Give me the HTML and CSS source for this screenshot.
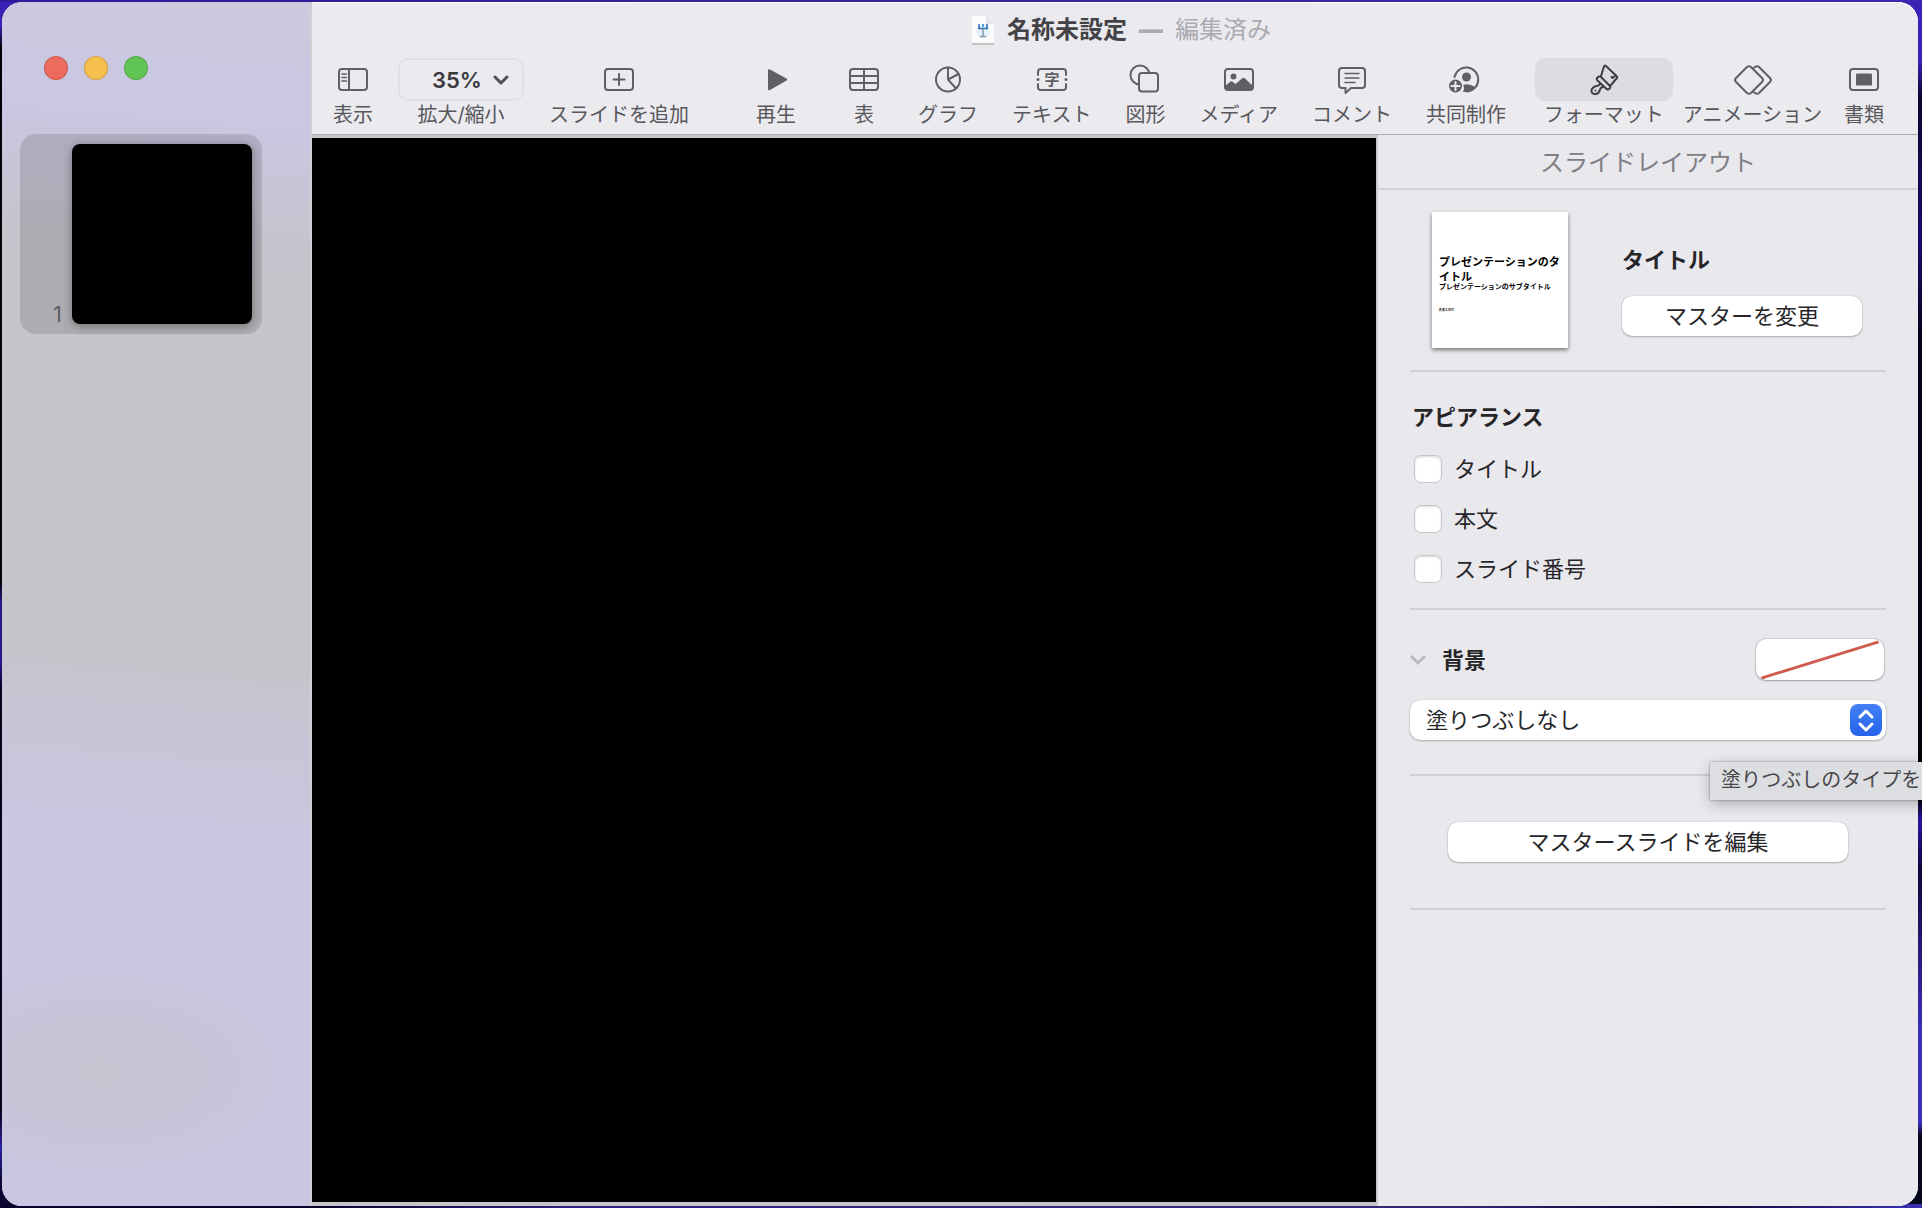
FILE: index.html
```html
<!DOCTYPE html>
<html lang="ja">

<head>
    <meta charset="UTF-8">
    <meta name="viewport" content="width=device-width, initial-scale=1.0">
    <title>名称未設定</title>

    <link rel="stylesheet" href="styles.css">
</head>

<body>
    <div class="window">
        <aside class="sidebar">
            <div class="lights">
                <button class="light red" aria-label="閉じる"></button>
                <button class="light yellow" aria-label="しまう"></button>
                <button class="light green" aria-label="フルスクリーン"></button>
            </div>
            <div class="slide-item">
                <span class="slide-number">1</span>
                <div class="slide-thumb"></div>
            </div>
        </aside>

        <div class="main">
            <header class="toolbar">
                <div class="titlebar">
                    <svg class="doc-icon" width="24" height="32" viewBox="0 0 24 32">
                        <path d="M1 2H15L23 10V30H1Z" fill="#fbfbfc" />
                        <path d="M1 30H23" stroke="#c3c3c7" stroke-width="2" />
                        <path d="M15 2V10H23Z" fill="#e4e4e8" />
                        <circle cx="12" cy="17" r="7" fill="#e6f1f9" />
                        <path d="M7 14.500H17M8 10V14M16 10V14" fill="none" stroke="#2c6cb0" stroke-width="1.500" />
                        <rect x="11" y="10" width="2" height="3" fill="#4aa3dc" />
                        <path d="M12 15V22M9 22.500H15" stroke="#8297ad" stroke-width="1.500" />
                    </svg>
                    <h1>名称未設定</h1>
                    <span class="edited dash">—</span>
                    <span class="edited">編集済み</span>
                </div>

                <nav class="tools">
                    <div class="tool-group first">
                        <button class="tool">
                            <span class="tool-icon">
                                <svg class="icon" viewBox="0 0 40 40">
                                    <rect x="6" y="9" width="28" height="21" rx="3" />
                                    <path d="M16 9V30" />
                                    <path class="thin" d="M9 14H13.500M9 17.500H13.500M9 21H13.500" />
                                </svg>
                            </span>
                            表示
                        </button>
                        <div class="tool">
                            <select class="zoom" id="zoom">
                                <option>35%</option>
                            </select>
                            <svg class="zoom-arrow" viewBox="0 0 16 10">
                                <path d="M2 2L8 8L14 2" />
                            </svg>
                            <label for="zoom">拡大/縮小</label>
                        </div>
                        <button class="tool">
                            <span class="tool-icon">
                                <svg class="icon" viewBox="0 0 40 40">
                                    <rect x="6" y="9" width="28" height="21" rx="3" />
                                    <path d="M20 14V25M14.500 19.500H25.500" />
                                </svg>
                            </span>
                            スライドを追加
                        </button>
                    </div>

                    <div class="space large"></div>

                    <button class="tool">
                        <span class="tool-icon">
                            <svg class="icon" viewBox="0 0 40 40">
                                <path class="fill" d="M12 10.500Q12 8.500 14 9.500L30.500 18.500Q32 19.500 30.500 20.500L14 30Q12 31 12 29Z" />
                            </svg>
                        </span>
                        再生
                    </button>

                    <div class="space medium"></div>

                    <div class="tool-group middle">
                        <button class="tool">
                            <span class="tool-icon">
                                <svg class="icon" viewBox="0 0 40 40">
                                    <rect x="6" y="9" width="28" height="21" rx="3" />
                                    <path d="M20 9V30M6 16H34M6 23H34" />
                                </svg>
                            </span>
                            表
                        </button>
                        <button class="tool">
                            <span class="tool-icon">
                                <svg class="icon" viewBox="0 0 40 40">
                                    <circle cx="20" cy="19.500" r="12" />
                                    <path d="M20 7.500V19.500L30.500 14M20 19.500L28 28.500" />
                                </svg>
                            </span>
                            グラフ
                        </button>
                        <button class="tool">
                            <span class="tool-icon">
                                <svg class="icon" viewBox="0 0 40 40">
                                    <path d="M6 15V12Q6 9 9 9H31Q34 9 34 12V15M34 24V27Q34 30 31 30H9Q6 30 6 27V24" />
                                    <circle class="fill" cx="6" cy="19.500" r="1.500" />
                                    <circle class="fill" cx="34" cy="19.500" r="1.500" />
                                    <text x="20" y="25">字</text>
                                </svg>
                            </span>
                            テキスト
                        </button>
                        <button class="tool">
                            <span class="tool-icon">
                                <svg class="icon" viewBox="0 0 40 40">
                                    <circle cx="15" cy="15" r="9.500" />
                                    <rect x="14" y="13" width="19" height="18.500" rx="3" fill="#ebeaef" />
                                </svg>
                            </span>
                            図形
                        </button>
                        <button class="tool">
                            <span class="tool-icon">
                                <svg class="icon" viewBox="0 0 40 40">
                                    <rect x="6" y="9" width="28" height="21" rx="3" />
                                    <circle class="fill" cx="14.500" cy="16.500" r="3" />
                                    <path class="fill" d="M6 26L11 22Q12.500 20.500 14 22L16.500 24L23 18.500Q24.500 17 26 18.500L34 26V28Q34 30 32 30H8Q6 30 6 28Z" />
                                </svg>
                            </span>
                            メディア
                        </button>
                        <button class="tool">
                            <span class="tool-icon">
                                <svg class="icon" viewBox="0 0 40 40">
                                    <path d="M10 8H30Q33 8 33 11V25Q33 28 30 28H19L13.500 33V28H10Q7 28 7 25V11Q7 8 10 8Z" />
                                    <path class="thin" d="M13 13.500H27M13 18H27M13 22.500H23" />
                                </svg>
                            </span>
                            コメント
                        </button>
                        <button class="tool">
                            <span class="tool-icon">
                                <svg class="icon" viewBox="0 0 40 40">
                                    <path d="M8.500 17A12 12 0 1 1 21 31.500" />
                                    <circle class="fill" cx="20.500" cy="17" r="4.500" />
                                    <path class="fill" d="M17 25Q23 23 29 27Q26 32 17 32Q19 28 17 25Z" />
                                    <circle class="fill" cx="9.500" cy="26" r="6.500" />
                                    <path d="M9.500 22V30M5.500 26H13.500" stroke="#ebeaef" />
                                </svg>
                            </span>
                            共同制作
                        </button>
                    </div>

                    <div class="space small"></div>

                    <div class="tool-group last">
                        <button class="tool">
                            <span class="tool-icon selected">
                                <svg class="icon dark" viewBox="0 0 40 40">
                                    <path d="M17 16L20 6.500Q20.500 5 22 6L32.500 16Q34 17.500 32.500 18.500L27 25" />
                                    <path d="M31.500 15.500L28.500 18L27.500 17" />
                                    <path d="M13.500 17.500Q15.500 15.500 17.500 17.500L26 26Q27 28 25 29Q23.500 30 22 28.500L13.500 20.500Q12 19 13.500 17.500Z" />
                                    <path d="M16 23.500Q16 25.500 11 26.500Q7 28.500 7.500 31.500Q8.500 34.500 12 34Q15 33.500 16 29.500Q17 27 19 27" />
                                    <circle class="fill" cx="11.500" cy="30.500" r="1" />
                                </svg>
                            </span>
                            フォーマット
                        </button>
                        <button class="tool">
                            <span class="tool-icon">
                                <svg class="icon" viewBox="0 0 40 40">
                                    <path d="M15 7Q17 5.500 19 7L30 18Q32 20 30 22L19 33Q17 34.500 15 33L4 22Q2 20 4 18Z" />
                                    <path d="M21.500 8L23 7Q25 5.500 27 7L38 18Q40 20 38 22L27 33Q25 34.500 23 33L21.500 32" />
                                </svg>
                            </span>
                            アニメーション
                        </button>
                        <button class="tool narrow">
                            <span class="tool-icon">
                                <svg class="icon" viewBox="0 0 40 40">
                                    <rect x="6" y="9" width="28" height="21" rx="3" />
                                    <rect class="fill" x="12" y="13.500" width="16" height="12" rx="1" />
                                </svg>
                            </span>
                            書類
                        </button>
                    </div>
                </nav>
            </header>

            <div class="content">
                <main class="canvas">
                    <div class="slide"></div>
                </main>

                <aside class="inspector">
                    <h2 class="inspector-title">スライドレイアウト</h2>

                    <section class="section master">
                        <div class="master-thumb">
                            <p class="master-title">プレゼンテーションのタイトル</p>
                            <p class="master-subtitle">プレゼンテーションのサブタイトル</p>
                            <p class="master-author">作者と日付</p>
                        </div>
                        <div class="master-info">
                            <h3>タイトル</h3>
                            <button class="push">マスターを変更</button>
                        </div>
                    </section>

                    <section class="section appearance">
                        <h3>アピアランス</h3>
                        <label class="check"><input type="checkbox">タイトル</label>
                        <label class="check"><input type="checkbox">本文</label>
                        <label class="check"><input type="checkbox">スライド番号</label>
                    </section>

                    <section class="section background">
                        <div class="background-head">
                            <svg class="disclosure" viewBox="0 0 16 12">
                                <path d="M1 2L8 9L15 2" />
                            </svg>
                            <h3>背景</h3>
                            <button class="swatch" aria-label="塗りつぶしの色">
                                <svg viewBox="0 0 128 42">
                                    <path d="M4 40L124 3" />
                                </svg>
                            </button>
                        </div>
                        <div class="popup">
                            <select class="fill-type" aria-label="塗りつぶしのタイプ">
                                <option>塗りつぶしなし</option>
                            </select>
                            <svg class="popup-arrows" viewBox="0 0 32 32">
                                <path d="M10 13L16 7L22 13M10 20L16 26L22 20" />
                            </svg>
                            <div class="tooltip">塗りつぶしのタイプを</div>
                        </div>
                    </section>

                    <section class="section edit">
                        <button class="push wide">マスタースライドを編集</button>
                    </section>
                </aside>
            </div>
        </div>
    </div>
</body>

</html>
```
FILE: styles.css
```css
* {
    box-sizing: border-box;
}

body {
    font-family: Inter, "Noto Sans CJK JP", sans-serif;
    font-size: 22px;
    line-height: 32px;
    color: #262629;
    margin: 0;
    padding: 2px 4px 2px 2px;
    height: 100vh;
    overflow: hidden;
    background-color: #0a0530;
    background-image:
        linear-gradient(90deg, #2c1a9a, #3a2494 50%, #3d28b4),
        linear-gradient(90deg, #08042c 16%, #2c2480 30%, #2f2a7c 75%, #08062c 88%, #3a30b4),
        linear-gradient(#3a22b8 2%, #020108 4%, #020108 48%, #2a168e 50%, #2a168e 55%, #05021c 57%, #05021c 92%, #2c22a0 95%, #0a0530 98%),
        linear-gradient(#3a22b8 5%, #0a0530 8%, #1a0c68 20%, #05021c 28%, #020108 66%, #2a14a0 68%, #0c0638 72%, #3a2eb4 85%, #3a2eb4 93%, #04061c 94%);
    background-position: top, bottom, left, right;
    background-size: 100% 2px, 100% 4px, 20px 100%, 20px 100%;
    background-repeat: no-repeat;
}

h1,
h2,
h3,
p {
    margin: 0;
}

h3 {
    font-size: 22px;
    font-weight: 700;
}

button,
select {
    font-family: inherit;
    font-size: inherit;
    line-height: inherit;
    color: inherit;
    border: none;
    padding: 0;
    background: none;
}

select {
    appearance: none;
}

.window {
    display: flex;
    height: 100%;
    border-radius: 20px;
    background-color: #e9e8ed;
}

/* Sidebar */

.sidebar {
    width: 310px;
    flex-shrink: 0;
    padding: 54px 18px 0;
    border-right: 2px solid #d0cfd6;
    border-radius: 20px 0 0 20px;
    background:
        radial-gradient(ellipse 220px 120px at 100px 1070px, #c6c4d0, transparent),
        linear-gradient(185deg, #cccade 0%, #c9c7e2 10%, #c5c4cd 20%, #c5c4c9 28%, #c5c4c8 53%, #c7c5d4 59%, #c9c6e2 70%, #c9c6e2 100%);
}

.lights {
    display: flex;
    gap: 16px;
    padding-left: 24px;
    margin-bottom: 54px;
}

.light {
    width: 24px;
    height: 24px;
    border-radius: 50%;
    border: 1px solid rgba(0, 0, 0, 0.15);
}

.red {
    background-color: #ec6a5e;
}

.yellow {
    background-color: #f4bf4f;
}

.green {
    background-color: #61c554;
}

.slide-item {
    display: flex;
    align-items: flex-end;
    justify-content: flex-end;
    gap: 10px;
    width: 242px;
    padding: 10px;
    border-radius: 16px;
    background-color: rgba(0, 0, 0, 0.12);
}

.slide-number {
    line-height: 20px;
    color: #5d5d62;
}

.slide-thumb {
    width: 180px;
    height: 180px;
    border-radius: 8px;
    background-color: #000;
    box-shadow: 0 2px 10px rgba(0, 0, 0, 0.35);
}

/* Toolbar */

.main {
    flex: 1;
    min-width: 0;
    display: flex;
    flex-direction: column;
}

.toolbar {
    background-color: #ebeaef;
    border-bottom: 1px solid #adadb2;
    border-radius: 0 20px 0 0;
    box-shadow: inset 0 1px #fff;
}

.titlebar {
    display: flex;
    align-items: center;
    justify-content: center;
    gap: 12px;
    height: 56px;
    padding-left: 12px;
    font-size: 24px;
}

.titlebar h1 {
    font-size: 24px;
    color: #434347;
}

.edited {
    color: #aaaaaf;
}

.dash {
    font-weight: 900;
}

.tools {
    display: flex;
    padding: 0 34px 6px 21px;
}

.tool-group {
    display: flex;
}

.first {
    gap: 25px;
}

.middle {
    gap: 34px;
}

.last {
    gap: 10px;
}

.large {
    flex: 7;
}

.medium {
    flex: 5;
}

.small {
    flex: 3;
}

.tool {
    position: relative;
    display: flex;
    flex-direction: column;
    align-items: center;
    gap: 1px;
    min-width: 40px;
    font-size: 20px;
    line-height: 26px;
    color: #57575c;
    white-space: nowrap;
}

.narrow {
    margin-left: 12px;
}

.tool-icon {
    display: flex;
    align-items: center;
    justify-content: center;
    height: 43px;
}

.selected {
    width: 138px;
    border-radius: 10px;
    background-color: #dddce1;
}

.icon {
    width: 40px;
    height: 40px;
    fill: none;
    stroke: #5f5f64;
    stroke-width: 2;
    stroke-linecap: round;
    stroke-linejoin: round;
}

.icon .fill {
    fill: #5f5f64;
    stroke: none;
}

.icon .thin {
    stroke-width: 1.5;
}

.icon text {
    fill: #5f5f64;
    stroke: none;
    font-size: 15px;
    font-weight: 700;
    text-anchor: middle;
}

.icon.dark {
    stroke: #3f3f43;
}

.icon.dark .fill {
    fill: #3f3f43;
}

.zoom {
    width: 126px;
    height: 43px;
    padding-left: 32px;
    border: 2px solid #e1e0e5;
    border-radius: 10px;
    font-size: 22px;
    font-weight: 600;
    color: #39393d;
}

.zoom-arrow {
    position: absolute;
    top: 17px;
    right: 15px;
    width: 16px;
    height: 10px;
    fill: none;
    stroke: #4f4f54;
    stroke-width: 3;
    stroke-linecap: round;
    stroke-linejoin: round;
    pointer-events: none;
}

/* Slide area */

.content {
    flex: 1;
    min-height: 0;
    display: flex;
}

.canvas {
    flex: 1;
    display: flex;
    padding: 3px 0 4px;
    background-color: #c5c5ca;
}

.slide {
    flex: 1;
    background-color: #000;
}

/* Inspector */

.inspector {
    width: 542px;
    border-left: 2px solid #c9c8cc;
    border-radius: 0 0 20px 0;
    background-color: #e9e8ed;
}

.inspector-title {
    height: 55px;
    border-bottom: 2px solid #d3d2d7;
    font-size: 24px;
    font-weight: 400;
    line-height: 56px;
    text-align: center;
    color: #7e7e83;
}

.section {
    margin: 0 32px;
    border-bottom: 2px solid #d0cfd4;
}

.master {
    display: flex;
    justify-content: space-between;
    padding: 22px 24px 22px 22px;
}

.master-thumb {
    width: 136px;
    height: 136px;
    padding: 43px 6px 0 7px;
    background-color: #fff;
    color: #000;
    font-weight: 700;
    box-shadow: 0 2px 4px rgba(0, 0, 0, 0.5);
}

.master-title {
    font-size: 11px;
    line-height: 15px;
}

.master-subtitle {
    font-size: 7px;
    line-height: 4px;
    white-space: nowrap;
}

.master-author {
    margin-top: 17px;
    font-size: 3px;
    line-height: 8px;
}

.master-info {
    display: flex;
    flex-direction: column;
    gap: 20px;
    width: 240px;
    padding-top: 32px;
}

.push {
    height: 40px;
    border-radius: 10px;
    background-color: #fff;
    box-shadow: 0 0 1px rgba(0, 0, 0, 0.3), 0 1px 2px rgba(0, 0, 0, 0.25);
}

.appearance {
    padding: 29px 0 14px 2px;
}

.appearance h3 {
    margin-bottom: 11px;
}

.check {
    display: flex;
    align-items: center;
    gap: 12px;
    width: max-content;
    height: 50px;
    padding-left: 2px;
}

.check input {
    appearance: none;
    width: 28px;
    height: 28px;
    margin: 0;
    border: 1px solid #c6c5ca;
    border-radius: 7px;
    background-color: #fff;
    box-shadow: inset 0 1px 2px rgba(0, 0, 0, 0.15);
}

.background {
    padding: 29px 0 34px;
}

.background-head {
    display: flex;
    align-items: center;
    gap: 16px;
    padding-right: 2px;
    margin-bottom: 20px;
}

.disclosure {
    width: 16px;
    height: 12px;
    fill: none;
    stroke: #b9b9be;
    stroke-width: 3;
}

.swatch {
    width: 128px;
    height: 41px;
    margin-left: auto;
    border-radius: 10px;
    background-color: #fff;
    overflow: hidden;
    box-shadow: 0 0 2px rgba(0, 0, 0, 0.35), 0 1px 2px rgba(0, 0, 0, 0.25);
}

.swatch svg {
    display: block;
    width: 100%;
    height: 100%;
    stroke: #cf5b4e;
    stroke-width: 3;
}

.popup {
    position: relative;
}

.fill-type {
    display: block;
    width: 100%;
    height: 40px;
    padding-left: 16px;
    border-radius: 10px;
    background-color: #fff;
    box-shadow: 0 0 1px rgba(0, 0, 0, 0.3), 0 1px 2px rgba(0, 0, 0, 0.25);
}

.popup-arrows {
    position: absolute;
    top: 4px;
    right: 4px;
    width: 32px;
    height: 32px;
    border-radius: 8px;
    background: linear-gradient(#4380f6, #2463ea);
    fill: none;
    stroke: #fff;
    stroke-width: 3;
    stroke-linecap: round;
    stroke-linejoin: round;
    pointer-events: none;
}

/* hangs below the popup and runs out past the window edge */
.tooltip {
    position: absolute;
    top: 62px;
    left: 300px;
    height: 38px;
    padding: 0 12px 0 11px;
    font-size: 20px;
    line-height: 37px;
    white-space: nowrap;
    color: #48484b;
    background-color: #dddee1;
    box-shadow: 0 0 2px rgba(0, 0, 0, 0.4), 0 4px 14px rgba(0, 0, 0, 0.25);
}

.edit {
    display: flex;
    justify-content: center;
    padding: 46px 0;
}

.wide {
    width: 400px;
}
```
